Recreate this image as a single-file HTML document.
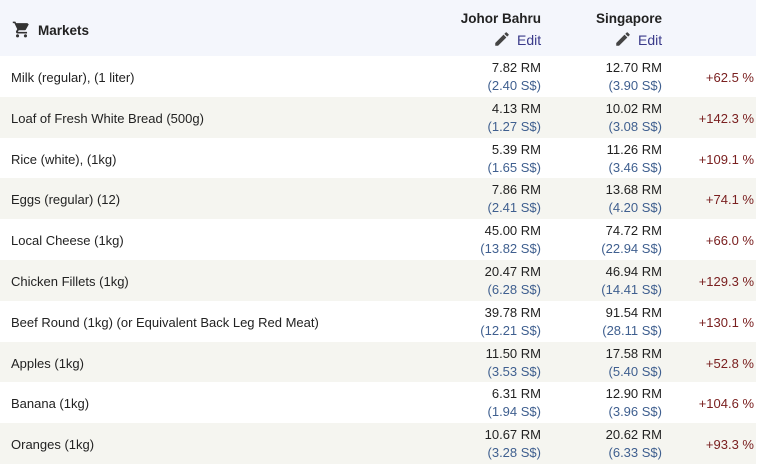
<!DOCTYPE html>
<html><head><style>
body{margin:0;background:#fff;font-family:"Liberation Sans",sans-serif;font-size:13px;color:#222;width:768px;height:464px;overflow:hidden}
.t{position:absolute;left:0;top:0;width:756px}
.h{height:56px;background:#f4f6fc;position:relative}
.r{height:40.8px;position:relative}
.r:nth-child(even){background:#f5f5f0}
.n{position:absolute;left:11px;top:14px}
.v{position:absolute;text-align:right;line-height:18px;top:3px}
.a{right:215px}.b{right:94px}
.s{color:#3f5f8f}
.p{position:absolute;right:2px;top:14px;color:#7a2020}
.hd{position:absolute;font-weight:bold;font-size:13.5px;text-align:right}
.ed{position:absolute;color:#3a3a8a;font-size:14px;top:32px}
</style></head><body>
<div class="t">
<div class="h">
<svg style="position:absolute;left:12px;top:20px" width="19" height="19" viewBox="0 0 24 24"><path fill="#333" d="M7 18c-1.1 0-2 .9-2 2s.9 2 2 2 2-.9 2-2-.9-2-2-2zM1 2v2h2l3.6 7.6-1.4 2.4C5.1 14.3 5 14.7 5 15c0 1.1.9 2 2 2h12v-2H7.4l1.1-2h7.4c.8 0 1.4-.4 1.7-1l3.6-6.5L19.4 4H5.2l-.9-2H1zm16 16c-1.1 0-2 .9-2 2s.9 2 2 2 2-.9 2-2-.9-2-2-2z"/></svg>
<div class="hd" style="left:38px;top:23px">Markets</div>
<div class="hd" style="right:215px;top:11px">Johor Bahru</div>
<div class="hd" style="right:94px;top:11px">Singapore</div>
<svg style="position:absolute;left:493px;top:30px" width="18" height="18" viewBox="0 0 24 24"><path fill="#444" d="M3 17.25V21h3.75L17.8 9.94l-3.75-3.75L3 17.25zM20.7 7.04a1 1 0 000-1.41l-2.34-2.34a1 1 0 00-1.41 0l-1.83 1.83 3.75 3.75 1.83-1.83z"/></svg>
<div class="ed" style="left:517px">Edit</div>
<svg style="position:absolute;left:614px;top:30px" width="18" height="18" viewBox="0 0 24 24"><path fill="#444" d="M3 17.25V21h3.75L17.8 9.94l-3.75-3.75L3 17.25zM20.7 7.04a1 1 0 000-1.41l-2.34-2.34a1 1 0 00-1.41 0l-1.83 1.83 3.75 3.75 1.83-1.83z"/></svg>
<div class="ed" style="left:638px">Edit</div>
</div>
<div>
<div class="r"><div class="n">Milk (regular), (1 liter)</div><div class="v a">7.82 RM<br><span class="s">(2.40 S$)</span></div><div class="v b">12.70 RM<br><span class="s">(3.90 S$)</span></div><div class="p">+62.5 %</div></div>
<div class="r"><div class="n">Loaf of Fresh White Bread (500g)</div><div class="v a">4.13 RM<br><span class="s">(1.27 S$)</span></div><div class="v b">10.02 RM<br><span class="s">(3.08 S$)</span></div><div class="p">+142.3 %</div></div>
<div class="r"><div class="n">Rice (white), (1kg)</div><div class="v a">5.39 RM<br><span class="s">(1.65 S$)</span></div><div class="v b">11.26 RM<br><span class="s">(3.46 S$)</span></div><div class="p">+109.1 %</div></div>
<div class="r"><div class="n">Eggs (regular) (12)</div><div class="v a">7.86 RM<br><span class="s">(2.41 S$)</span></div><div class="v b">13.68 RM<br><span class="s">(4.20 S$)</span></div><div class="p">+74.1 %</div></div>
<div class="r"><div class="n">Local Cheese (1kg)</div><div class="v a">45.00 RM<br><span class="s">(13.82 S$)</span></div><div class="v b">74.72 RM<br><span class="s">(22.94 S$)</span></div><div class="p">+66.0 %</div></div>
<div class="r"><div class="n">Chicken Fillets (1kg)</div><div class="v a">20.47 RM<br><span class="s">(6.28 S$)</span></div><div class="v b">46.94 RM<br><span class="s">(14.41 S$)</span></div><div class="p">+129.3 %</div></div>
<div class="r"><div class="n">Beef Round (1kg) (or Equivalent Back Leg Red Meat)</div><div class="v a">39.78 RM<br><span class="s">(12.21 S$)</span></div><div class="v b">91.54 RM<br><span class="s">(28.11 S$)</span></div><div class="p">+130.1 %</div></div>
<div class="r"><div class="n">Apples (1kg)</div><div class="v a">11.50 RM<br><span class="s">(3.53 S$)</span></div><div class="v b">17.58 RM<br><span class="s">(5.40 S$)</span></div><div class="p">+52.8 %</div></div>
<div class="r"><div class="n">Banana (1kg)</div><div class="v a">6.31 RM<br><span class="s">(1.94 S$)</span></div><div class="v b">12.90 RM<br><span class="s">(3.96 S$)</span></div><div class="p">+104.6 %</div></div>
<div class="r"><div class="n">Oranges (1kg)</div><div class="v a">10.67 RM<br><span class="s">(3.28 S$)</span></div><div class="v b">20.62 RM<br><span class="s">(6.33 S$)</span></div><div class="p">+93.3 %</div></div>
</div>
</div>
</body></html>
